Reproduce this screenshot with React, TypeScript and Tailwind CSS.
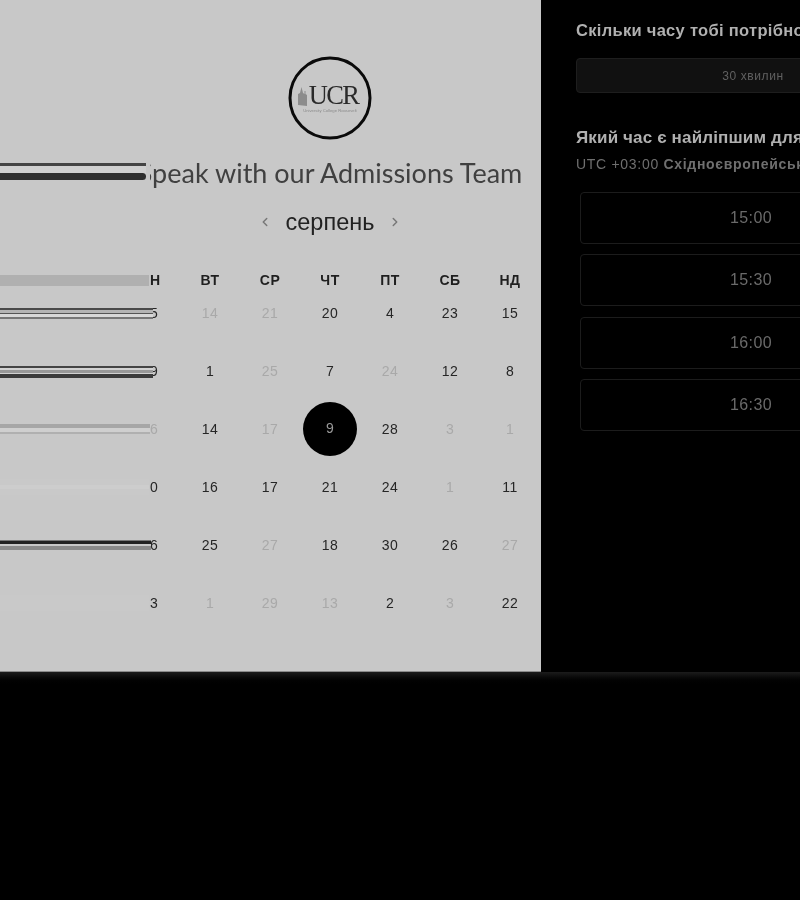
import React from 'react';
import { ChevronLeft, ChevronRight } from 'lucide-react';

type Day = { label: string; muted?: boolean; selected?: boolean };
type Week = { days: Day[]; streakWidth: string; stripes: string[]; streakTop: string };

const d = (label: string): Day => ({ label });
const m = (label: string): Day => ({ label, muted: true });

const WEEKDAYS = ['ПН', 'ВТ', 'СР', 'ЧТ', 'ПТ', 'СБ', 'НД'];
const SLOTS = ['15:00', '15:30', '16:00', '16:30'];

const WEEKS: Week[] = [
  {
    days: [d('15'), m('14'), m('21'), d('20'), d('4'), d('23'), d('15')],
    streakWidth: 'w-[153px]',
    streakTop: 'top-[20px]',
    stripes: [
      'h-[2px] bg-[#4a4a4a]',
      'h-[3px] bg-[#b4b4b4]',
      'h-[1px] bg-[#555555]',
      'h-[3px] bg-[#d8d8d8]',
      'h-[2px] bg-[#777777]',
    ],
  },
  {
    days: [d('19'), d('1'), m('25'), d('7'), m('24'), d('12'), d('8')],
    streakWidth: 'w-[153px]',
    streakTop: 'top-[20px]',
    stripes: [
      'h-[2px] bg-[#444444]',
      'h-[2px] bg-[#d2d2d2]',
      'h-[3px] bg-[#999999]',
      'h-[1px] bg-[#d2d2d2]',
      'h-[4px] bg-[#3c3c3c]',
    ],
  },
  {
    days: [m('16'), d('14'), m('17'), { label: '9', selected: true }, d('28'), m('3'), m('1')],
    streakWidth: 'w-[150px]',
    streakTop: 'top-[20px]',
    stripes: [
      'h-[4px] bg-[#a6a6a6]',
      'h-[4px] bg-[#cfcfcf]',
      'h-[2px] bg-[#b0b0b0]',
    ],
  },
  {
    days: [d('10'), d('16'), d('17'), d('21'), d('24'), m('1'), d('11')],
    streakWidth: 'w-[149px]',
    streakTop: 'top-[17px]',
    stripes: [
      'h-[6px] bg-[#c9c9c9]',
      'h-[4px] bg-[#cdcdcd]',
      'h-[6px] bg-[#c9c9c9]',
    ],
  },
  {
    days: [d('16'), d('25'), m('27'), d('18'), d('30'), d('26'), m('27')],
    streakWidth: 'w-[151px]',
    streakTop: 'top-[20px]',
    stripes: [
      'h-[1px] bg-[#777777]',
      'h-[3px] bg-[#222222]',
      'h-[2px] bg-[#c8c8c8]',
      'h-[4px] bg-[#8a8a8a]',
    ],
  },
  {
    days: [d('13'), m('1'), m('29'), m('13'), d('2'), m('3'), d('22')],
    streakWidth: 'w-[149px]',
    streakTop: 'top-[17px]',
    stripes: ['h-[16px] bg-[#c9c9c9]'],
  },
];

const UcrLogo = () => (
  <svg width="86" height="86" viewBox="0 0 86 86" className="block">
    <circle cx="43" cy="43" r="40" fill="none" stroke="#0a0a0a" strokeWidth="3" />
    <path d="M11 50V39l2-1 1.500-6 1.500 6 1.500 1v-3h1v3l1.500 1v11z" fill="#8c8c8c" />
    <text
      x="46.500"
      y="49"
      textAnchor="middle"
      fontFamily="'Liberation Serif', serif"
      fontSize="26.500"
      letterSpacing="-1.600"
      fill="#2a2a2a"
    >
      UCR
    </text>
    <text
      x="43"
      y="57"
      textAnchor="middle"
      fontFamily="'Liberation Sans', sans-serif"
      fontSize="4.200"
      fill="#8a8a8a"
    >
      University College Roosevelt
    </text>
  </svg>
);

const DayCell = ({ day }: { day: Day }) => {
  if (day.selected) {
    return (
      <div className="flex h-[50px] items-center justify-center">
        <div className="flex h-[54px] w-[54px] shrink-0 items-center justify-center rounded-full bg-black pb-[3px] text-[#9a9a9a]">
          {day.label}
        </div>
      </div>
    );
  }
  return (
    <div
      className={`flex h-[50px] items-center justify-center ${
        day.muted ? 'text-[#a9a9a9]' : 'text-[#262626]'
      }`}
    >
      {day.label}
    </div>
  );
};

const App: React.FC = () => {
  return (
    <div className="h-[900px] w-[800px] overflow-hidden bg-black font-['Liberation_Sans',Arial,sans-serif] blur-[0.4px]">
      <div className="flex h-[672px]">
        {/* Calendar panel */}
        <div className="w-[541px] shrink-0 border-b border-[#8a8a8a] bg-[#c8c8c8] pl-[120px] pr-[1px] pt-[55px]">
          <div className="flex flex-col items-center">
            <UcrLogo />

            <div className="relative mt-[14px] h-9 w-full text-center font-['Lato',sans-serif] text-[27px] font-normal leading-9 whitespace-nowrap text-[#404040]">
              Speak with our Admissions Team
              <div className="absolute left-[-120px] top-[6px] flex h-[24px] w-[150px] flex-col bg-[#c8c8c8] pt-[2px]">
                <div className="h-[3px] w-[146px] bg-[#444444]" />
                <div className="h-[7px] w-[146px] bg-[#d0d0d0]" />
                <div className="h-[7px] w-[146px] rounded-r-full bg-[#2f2f2f]" />
              </div>
            </div>

            <div className="mt-[15px] flex h-8 items-center justify-center">
              <ChevronLeft size={14} strokeWidth={2.5} className="text-[#777777]" />
              <span className="mx-[14px] text-[23.5px] leading-8 text-[#222222]">серпень</span>
              <ChevronRight size={14} strokeWidth={2.5} className="text-[#777777]" />
            </div>
          </div>

          <div className="relative mt-[34px] grid h-4 grid-cols-7 text-center text-sm font-bold leading-4 tracking-[0.5px] text-[#1f1f1f]">
            {WEEKDAYS.map((name) => (
              <div key={name}>{name}</div>
            ))}
            <div className="absolute left-[-120px] top-[3px] h-[11px] w-[149px] bg-[#b0b0b0]" />
          </div>

          <div className="flex flex-col gap-2 text-sm tracking-[0.4px]">
            {WEEKS.map((week, i) => (
              <div key={i} className="relative grid grid-cols-7">
                {week.days.map((day, j) => (
                  <DayCell key={j} day={day} />
                ))}
                <div
                  className={`absolute left-[-120px] flex flex-col rounded-r-sm bg-[#c8c8c8] ${
                    week.streakTop
                  } ${week.streakWidth}`}
                >
                  {week.stripes.map((stripe, k) => (
                    <div key={k} className={stripe} />
                  ))}
                </div>
              </div>
            ))}
          </div>
        </div>

        {/* Time picker panel */}
        <div className="w-[400px] shrink-0 bg-black pl-[35px] pt-[19px]">
          <h2 className="h-[22px] text-[16.5px] font-bold leading-[22px] tracking-[0.3px] whitespace-nowrap text-[#b0b0b0]">
            Скільки часу тобі потрібно?
          </h2>
          <div className="mt-[17px] flex h-[35px] w-[354px] items-center justify-center rounded-sm border border-[#1e1e1e] bg-[#111111] text-xs tracking-[0.6px] text-[#606060]">
            30 хвилин
          </div>
          <h2 className="mt-[34px] h-[22px] text-[17px] font-bold leading-[22px] tracking-[0.15px] whitespace-nowrap text-[#b0b0b0]">
            Який час є найліпшим для тебе?
          </h2>
          <p className="mt-[5px] h-5 text-sm leading-5 tracking-[0.7px] whitespace-nowrap text-[#6f6f6f]">
            UTC +03:00 <span className="font-bold">Східноєвропейський час</span>
          </p>
          <div className="ml-[4px] mt-[18px] flex w-[342px] flex-col gap-[10.33px]">
            {SLOTS.map((slot) => (
              <div
                key={slot}
                className="flex h-[52px] items-center justify-center rounded-sm border border-[#1c1c1c] text-base tracking-wide text-[#6a6a6a]"
              >
                {slot}
              </div>
            ))}
          </div>
        </div>
      </div>

      {/* Faint glow under the panels */}
      <div className="h-[14px] bg-gradient-to-b from-[#1c1c1c] to-black" />
    </div>
  );
};

export default App;
